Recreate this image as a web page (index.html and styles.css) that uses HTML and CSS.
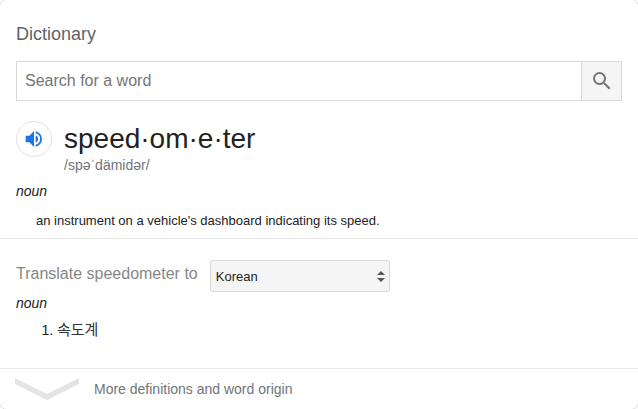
FILE: index.html
```html
<!DOCTYPE html>
<html lang="en">
<head>
<meta charset="utf-8">
<title>Dictionary</title>
<link rel="stylesheet" href="styles.css">
</head>
<body>
<main class="card">
  <section class="entry">
    <h1 class="title">Dictionary</h1>
    <form class="search">
      <input class="search-input" type="text" placeholder="Search for a word" aria-label="Search for a word">
      <button class="search-button" type="button" aria-label="Search">
        <svg class="search-icon" viewBox="0 0 24 24"><path d="M15.5 14h-.79l-.28-.27A6.47 6.47 0 0 0 16 9.5 6.5 6.5 0 1 0 9.5 16c1.61 0 3.09-.59 4.23-1.57l.27.28v.79l5 4.99L20.49 19l-4.99-5zm-6 0C7.01 14 5 11.99 5 9.5S7.01 5 9.5 5 14 7.01 14 9.5 11.99 14 9.5 14z"/></svg>
      </button>
    </form>
    <div class="headword">
      <button class="speak" type="button" aria-label="Listen">
        <svg class="speak-icon" viewBox="0 0 24 24"><path d="M2 8v8h4.500l5.500 5.500V2.500L6.500 8H2zm15 4a5 5 0 0 0-3-4.500v9a5 5 0 0 0 3-4.500zM14 2.700v2.500a7 7 0 0 1 0 13.600v2.500a9.500 9.500 0 0 0 0-18.600z"/></svg>
      </button>
      <div>
        <h2 class="word">speed·om·e·ter</h2>
        <p class="phonetic">/spəˈdämidər/</p>
      </div>
    </div>
    <p class="pos">noun</p>
    <p class="definition">an instrument on a vehicle's dashboard indicating its speed.</p>
  </section>
  <section class="translate">
    <div class="translate-row">
      <label class="translate-label" for="language">Translate speedometer to</label>
      <div class="select-wrap">
        <select class="select" id="language"><option>Korean</option></select>
        <svg class="select-arrows" viewBox="0 0 8 12"><path d="M0 5l4-4 4 4zM0 8l4 4 4-4z"/></svg>
      </div>
    </div>
    <p class="pos">noun</p>
    <ol class="translations"><li><span class="korean" lang="ko">속도계</span></li></ol>
  </section>
  <a class="more" href="#">
    <svg class="chevron" viewBox="0 0 64 22"><path d="M0 0l32 16L64 0v6L32 22 0 6z"/></svg>
    <span>More definitions and word origin</span>
  </a>
</main>
</body>
</html>
```
FILE: styles.css
```css
* { box-sizing: border-box; }
html { overflow: hidden auto; }
body {
  display: flow-root;
  margin: 0;
  overflow: hidden;
  background: #fff;
  color: #222;
  font-family: "Liberation Sans", "Noto Sans CJK KR", sans-serif;
}
h1, h2, p, ol { margin: 0; font-weight: normal; }
/* The straight edges bleed off the page, leaving only the rounded corners. */
.card {
  margin: -1px;
  border: 1px solid #dfe1e5;
  border-radius: 8px;
  overflow: hidden;
}
.entry { padding: 22px 16px 9px; border-bottom: 1px solid #e8e8e8; }
.title { color: #5f6368; font-size: 18px; line-height: 24px; }
.search { display: flex; height: 40px; margin-top: 15px; border: 1px solid #d9d9d9; }
.search-input {
  flex: 1;
  min-width: 0;
  padding: 0 8px;
  border: 0;
  color: #222;
  font: 16px "Liberation Sans", sans-serif;
}
.search-input::placeholder { color: #757575; opacity: 1; }
.search-button {
  display: flex;
  align-items: center;
  justify-content: center;
  width: 40px;
  padding: 0;
  border: 0;
  border-left: 1px solid #d9d9d9;
  background: #f5f5f5;
}
.search-icon { width: 24px; height: 24px; fill: #757575; }
.headword { display: flex; gap: 12px; margin-top: 20px; }
.speak {
  display: flex;
  align-items: center;
  justify-content: center;
  width: 36px;
  height: 36px;
  padding: 0;
  border: 1px solid #dfe1e5;
  border-radius: 50%;
  background: #fff;
}
.speak-icon { width: 20px; height: 20px; fill: #1a73e8; }
.word { font-size: 28px; line-height: 36px; }
.phonetic { color: #70757a; font-size: 14px; line-height: 16px; }
.pos { margin-top: 8px; font-size: 14px; line-height: 20px; font-style: italic; }
.definition { padding: 12px 20px 0; font-size: 13px; line-height: 16px; }
.translate { padding: 21px 16px 28px; border-bottom: 1px solid #e8e8e8; }
.translate-row { display: flex; gap: 12px; }
.translate-label { color: #878787; font-size: 16px; line-height: 28px; }
.select-wrap { position: relative; width: 180px; }
.select {
  appearance: none;
  width: 100%;
  height: 32px;
  padding: 0 24px 0 5px;
  border: 1px solid #d9d9d9;
  border-radius: 2px;
  background: #f5f5f5;
  color: #222;
  font: 13px "Liberation Sans", sans-serif;
}
.select-arrows { position: absolute; top: 10px; right: 5px; width: 8px; height: 12px; fill: #555; pointer-events: none; }
.translate .pos { margin-top: 1px; }
.translations { padding: 7px 0 0 41px; font-size: 14px; line-height: 20px; }
.korean { color: #333; font-size: 15px; line-height: 16px; }
.more {
  display: flex;
  align-items: center;
  gap: 15px;
  height: 40px;
  padding: 0 15px;
  color: #70757a;
  font-size: 14px;
  text-decoration: none;
}
.chevron { width: 64px; height: 22px; fill: #e4e4e4; }
```
